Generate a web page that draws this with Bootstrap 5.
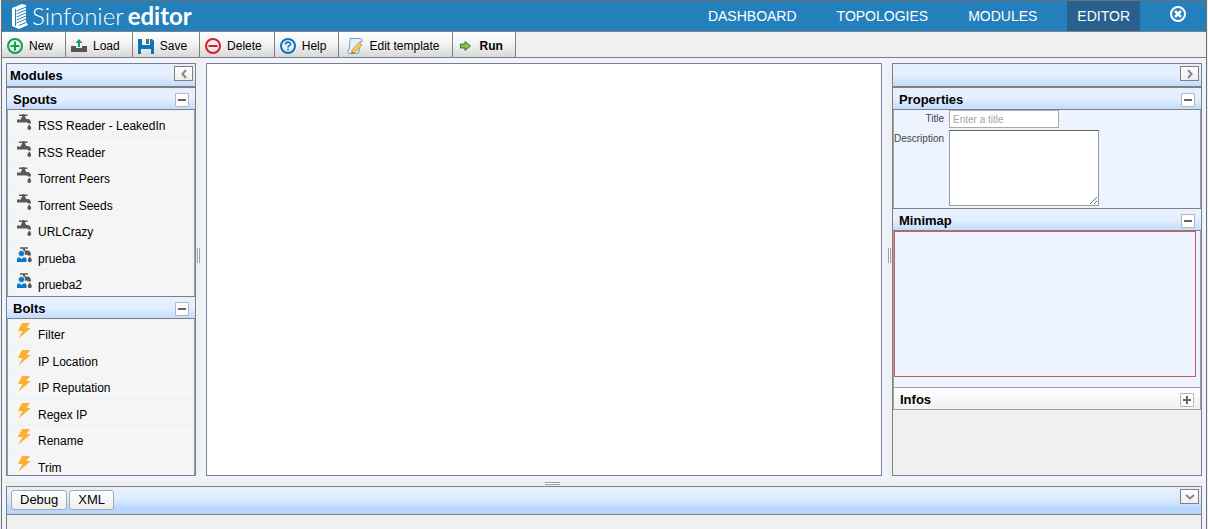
<!DOCTYPE html>
<html lang="en">
<head>
<meta charset="utf-8">
<meta name="viewport" content="width=device-width, initial-scale=1">
<title>Sinfonier editor</title>
<link rel="stylesheet" href="https://cdn.jsdelivr.net/npm/bootstrap@5.3.0/dist/css/bootstrap.min.css">
<style>
:root { --line: #808080; --pane: #edf4ff; --soft: #f0f0f0; }
body { font-family: "Liberation Sans", Arial, sans-serif; font-size: 12px; line-height: 16px; color: #000; background: var(--soft); }
.app { height: 100vh; border: 1px solid #707070; border-bottom: 0; margin: 0 1px; background: var(--soft); }
.topbar { background: #2380bd; border-bottom: 1px solid var(--line); height: 31px; }
.brand { color: #fff; font-family: Lato, sans-serif; font-size: 24px; line-height: 30px; }
.brand .thin { font-weight: 300; }
.brand .thick { font-weight: 700; }
.brand svg { margin-left: 9px; margin-right: 3px; }
.menu { gap: 20px; padding-right: 10px; }
.menu a { color: #fff; font-size: 14px; line-height: 30px; padding: 0 10px; text-decoration: none; }
.menu a.current { background: #28608f; }
.menu svg { margin-top: 5px; }
.toolbar { border-bottom: 1px solid var(--line); height: 26px; }
.tool { border: 0; border-right: 1px solid var(--line); background: linear-gradient(#fff, #f2f2f2 50%, #d8d8d8); padding: 2px 12px 0 5px; color: #000; gap: 6px; }
.tool.template { padding-left: 8px; }
.unit { background: var(--pane); padding: 5px 0; }
.unit-left { width: 194px; padding-left: 4px; }
.unit-center { padding: 5px; }
.unit-right { width: 314px; padding-right: 4px; }
.panel { border: 1px solid var(--line); background: var(--soft); height: 100%; }
.gutter { width: 5px; }
.gutter-row { height: 5px; }
.grip { width: 3px; height: 15px; border: solid #a0a0a0; border-width: 0 1px; background: #fff; margin-bottom: 28px; }
.gutter-row .grip { width: 15px; height: 3px; border-width: 1px 0; margin: 0 104px 0 0; }
.head, .section { font-size: 13px; line-height: 24px; font-weight: 700; margin: 0; background: linear-gradient(#e6effd, #e4f0ff 50%, #c2dbff); border-bottom: 1px solid var(--line); height: 22px; flex: none; }
.head { height: 24px; border-bottom-width: 2px; padding: 0 2px 0 3px; }
.section { padding: 0 6px; }
.section.divide { border-top: 1px solid var(--line); height: 23px; }
.section.closed { background: linear-gradient(#fff, #f0f0f0); border: 1px solid #a0a0a0; height: 23px; }
.fold { width: 19px; height: 15px; padding: 0; background: linear-gradient(#fff, #eee); border: 1px solid var(--line); margin-top: 2px; }
.toggle { width: 14px; height: 14px; padding: 0; background: #fff; border: 1px solid #b5b5b5; border-radius: 1px; margin-top: 5px; }
.fold svg, .toggle svg { display: block; margin: auto; }
.modules { display: grid; grid-template-rows: repeat(7, 1fr); height: 186px; flex: none; border: solid #a0a0a0; border-width: 0 1px; background: var(--pane); padding: 0 1px; }
.modules li { background: #f5f5f5; border: 1px solid #ecf3fb; padding-left: 7px; gap: 5px; }
.modules svg { margin-top: 3px; flex: none; }
.modules span { padding-top: 7px; }
.props { background: var(--pane); border: solid #a0a0a0; border-width: 0 1px; font-size: 10px; height: 98px; display: grid; grid-template-columns: 50px 1fr; column-gap: 5px; row-gap: 2px; align-content: start; }
.props label { text-align: right; color: #444; line-height: 17px; }
.props input { display: block; width: 110px; height: 18px; border: 1px solid #a9a9a9; padding: 0 3px; font-size: 10px; }
.props input::placeholder { color: #a5a5a5; opacity: 1; }
.props textarea { display: block; width: 150px; height: 76px; border: 1px solid #999; border-top-color: #666; background: #fff; }
.map-area { background: var(--pane); border: solid #a0a0a0; border-width: 0 1px; padding-right: 4px; height: 156px; }
.viewport-box { border: 1px solid #d05a60; height: 146px; }
.console { height: 43px; background: var(--pane); padding: 0 4px; flex: none; }
.console-head { height: 28px; border-bottom: 1px solid var(--line); background: linear-gradient(#e8f0fd, #dcecff 45%, #b8d6ff 80%, #bcd8ff); padding: 3px 2px 0 4px; gap: 2px; }
.console-head .tab { font-size: 13px; line-height: 18px; height: 20px; padding: 0 8px; border: 1px solid #a5a9b0; border-radius: 3px; background: linear-gradient(#fff, #eee); }
.console-head .fold { margin-top: -1px; }
</style>
</head>
<body>
<svg width="0" height="0" class="position-absolute" aria-hidden="true">
  <defs>
    <g id="tap" fill="#595959"><path d="M2 .500h3L6 0h1l1 .500h2.500V2H8v1.500h1V5h1.500q3.500 0 3.500 4.500h-3Q11 8.500 9.500 8.500H0V5.500h4v-2h1V2H2z"/><path d="M12.300 10.500c1.200 1.700 1.900 2.400 1.900 3.500a1.900 1.900 0 0 1-3.800 0c0-1.100.7-1.800 1.900-3.500z"/></g>
    <g id="usertap"><path fill="#595959" d="M3 .300h8v1.500H8V3.500h1.500c3.500 0 4.500 1.500 4.500 5h-3.500V7.800H8V5L6 3V1.800H3zM12.800 9.500c1.200 1.700 2 2.500 2 3.800a2 2 0 0 1-4 0c0-1.300.8-2.100 2-3.800z"/><circle cx="4.500" cy="6.500" r="3" fill="#0a78c4" stroke="#f5f5f5" stroke-width=".6"/><path fill="#0a78c4" d="M0 15v-2.500Q0 10.300 2.200 10.300L4.500 12l2.300-1.700Q9.500 10.300 9.500 12.500V15z"/></g>
    <path id="bolt" fill="#fbb034" d="M5 0h8L9.500 5H14L1.500 15.500 5.500 8H1z"/>
    <path id="minus" d="M2 5h8v2H2z" fill="#666"/>
  </defs>
</svg>
<div class="app d-flex flex-column overflow-hidden">
  <header class="topbar d-flex justify-content-between flex-shrink-0">
    <div class="brand d-flex align-items-center">
      <svg width="18" height="27" viewBox="0 0 18 27" fill="none"><path fill="#fff" d="M1 5 11 1l4 1v17l2 3-9 4-7-3z"/><path stroke="#2380bd" stroke-width="1" d="M5.500 8 15 4M5.500 11 15 7M5.500 14 15 10M5.500 17 15 13M5.500 20 15 16M8 22.500l7-3M4.500 6v17"/></svg>
      <span class="thin">Sinfonier</span><span class="thick ms-1">editor</span>
    </div>
    <nav class="menu d-flex align-items-stretch">
      <a href="#">DASHBOARD</a><a href="#">TOPOLOGIES</a><a href="#">MODULES</a><a href="#" class="current" aria-current="page">EDITOR</a>
      <a href="#" aria-label="Close"><svg width="16" height="16" viewBox="0 0 16 16" fill="none" stroke="#fff" class="d-block"><circle cx="8" cy="8" r="7" stroke-width="2"/><path d="m5 5 6 6M11 5l-6 6" stroke-width="2.500"/></svg></a>
    </nav>
  </header>
  <div class="toolbar d-flex flex-shrink-0" role="toolbar">
    <button class="tool d-flex align-items-center"><svg width="16" height="16" viewBox="0 0 16 16" fill="none" stroke="#0ba453" stroke-width="2"><circle cx="8" cy="8" r="7"/><path d="M8 3.500v9M3.500 8h9"/></svg>New</button>
    <button class="tool d-flex align-items-center"><svg width="16" height="16" viewBox="0 0 16 16"><path fill="#555" d="M0 8h5v2h6V8h5v6H0z"/><path fill="#0ba453" d="m8 1 3.500 4H9v4H7V5H4.500z"/></svg>Load</button>
    <button class="tool d-flex align-items-center"><svg width="16" height="16" viewBox="0 0 16 16"><path fill="#0b75bc" d="M0 1h4v6h8V1h2l2 2v13h-3v-5H3v5H0z"/><path fill="#666" d="M8 1h3v5H8z"/></svg>Save</button>
    <button class="tool d-flex align-items-center"><svg width="16" height="16" viewBox="0 0 16 16" fill="none" stroke="#db1d24" stroke-width="2"><circle cx="8" cy="8" r="7"/><path d="M3.500 8h9"/></svg>Delete</button>
    <button class="tool d-flex align-items-center"><svg width="16" height="16" viewBox="0 0 16 16" fill="none" stroke="#0b75c4" stroke-width="2"><circle cx="8" cy="8" r="7"/><path d="M5.500 6.500c0-3 5-3 5-.5 0 1.700-2.500 1.600-2.500 3.500M8 10.700v1.800" stroke-width="1.700"/></svg>Help</button>
    <button class="tool template d-flex align-items-center"><svg width="16" height="16" viewBox="0 0 16 16"><path fill="#e3effb" stroke="#6f9fd0" d="M3 .5h10.500q2 0 1.500 3h-2L12 14q0 1.500-2 1.500H2Q0 15 1 12h1L3 3z"/><path fill="#f7c85c" stroke="#c98b35" stroke-width=".8" d="m5 12 7-7.500 3 2.500-7 7.500-3.500 1z"/><path fill="#555" d="m4.500 15.500.5-2 1.500 1.500z"/></svg>Edit template</button>
    <button class="tool d-flex align-items-center fw-bold"><svg width="16" height="16" viewBox="0 0 16 16"><path fill="#82c455" stroke="#39791f" d="M2.500 6H7V3.500L12.500 8 7 12.500V10H2.500z"/></svg>Run</button>
  </div>
  <main class="d-flex flex-fill overflow-hidden">
    <aside class="unit unit-left flex-shrink-0">
      <div class="panel d-flex flex-column overflow-hidden">
        <h2 class="head d-flex justify-content-between">Modules<button class="fold" aria-label="Collapse modules"><svg width="8" height="10" viewBox="0 0 8 10" fill="none" stroke="#888" stroke-width="2"><path d="M6 1 2.500 5 6 9"/></svg></button></h2>
        <h3 class="section d-flex justify-content-between">Spouts<button class="toggle" aria-label="Collapse spouts"><svg width="12" height="12"><use href="#minus"/></svg></button></h3>
        <ul class="modules list-unstyled mb-0">
          <li class="d-flex"><svg width="16" height="16"><use href="#tap"/></svg><span>RSS Reader - LeakedIn</span></li>
          <li class="d-flex"><svg width="16" height="16"><use href="#tap"/></svg><span>RSS Reader</span></li>
          <li class="d-flex"><svg width="16" height="16"><use href="#tap"/></svg><span>Torrent Peers</span></li>
          <li class="d-flex"><svg width="16" height="16"><use href="#tap"/></svg><span>Torrent Seeds</span></li>
          <li class="d-flex"><svg width="16" height="16"><use href="#tap"/></svg><span>URLCrazy</span></li>
          <li class="d-flex"><svg width="16" height="16"><use href="#usertap"/></svg><span>prueba</span></li>
          <li class="d-flex"><svg width="16" height="16"><use href="#usertap"/></svg><span>prueba2</span></li>
        </ul>
        <h3 class="section divide d-flex justify-content-between">Bolts<button class="toggle" aria-label="Collapse bolts"><svg width="12" height="12"><use href="#minus"/></svg></button></h3>
        <ul class="modules list-unstyled mb-0">
          <li class="d-flex"><svg width="16" height="16"><use href="#bolt"/></svg><span>Filter</span></li>
          <li class="d-flex"><svg width="16" height="16"><use href="#bolt"/></svg><span>IP Location</span></li>
          <li class="d-flex"><svg width="16" height="16"><use href="#bolt"/></svg><span>IP Reputation</span></li>
          <li class="d-flex"><svg width="16" height="16"><use href="#bolt"/></svg><span>Regex IP</span></li>
          <li class="d-flex"><svg width="16" height="16"><use href="#bolt"/></svg><span>Rename</span></li>
          <li class="d-flex"><svg width="16" height="16"><use href="#bolt"/></svg><span>Trim</span></li>
        </ul>
      </div>
    </aside>
    <div class="gutter d-flex align-items-center justify-content-center flex-shrink-0"><div class="grip"></div></div>
    <section class="unit unit-center flex-fill"><div class="panel bg-white"></div></section>
    <div class="gutter d-flex align-items-center justify-content-center flex-shrink-0"><div class="grip"></div></div>
    <aside class="unit unit-right flex-shrink-0">
      <div class="panel overflow-hidden">
        <div class="head d-flex justify-content-end"><button class="fold" aria-label="Collapse properties pane"><svg width="8" height="10" viewBox="0 0 8 10" fill="none" stroke="#888" stroke-width="2"><path d="M2 1l3.500 4L2 9"/></svg></button></div>
        <h3 class="section d-flex justify-content-between">Properties<button class="toggle" aria-label="Collapse properties"><svg width="12" height="12"><use href="#minus"/></svg></button></h3>
        <form class="props">
          <label for="title">Title</label><input id="title" type="text" placeholder="Enter a title">
          <label for="description">Description</label><textarea id="description"></textarea>
        </form>
        <h3 class="section divide d-flex justify-content-between">Minimap<button class="toggle" aria-label="Collapse minimap"><svg width="12" height="12"><use href="#minus"/></svg></button></h3>
        <div class="map-area"><div class="viewport-box"></div></div>
        <h3 class="section closed d-flex justify-content-between">Infos<button class="toggle" aria-label="Expand infos"><svg width="12" height="12"><path fill="#666" d="M2 5h3V2h2v3h3v2H7v3H5V7H2z"/></svg></button></h3>
      </div>
    </aside>
  </main>
  <div class="gutter-row d-flex align-items-center justify-content-center flex-shrink-0"><div class="grip"></div></div>
  <footer class="console">
    <div class="panel border-bottom-0">
      <div class="console-head d-flex align-items-start">
        <button class="tab">Debug</button><button class="tab">XML</button>
        <button class="fold ms-auto" aria-label="Collapse console"><svg width="10" height="8" viewBox="0 0 10 8" fill="none" stroke="#888" stroke-width="2"><path d="m1 2 4 3.500L9 2"/></svg></button>
      </div>
    </div>
  </footer>
</div>
<script src="https://cdn.jsdelivr.net/npm/bootstrap@5.3.0/dist/js/bootstrap.bundle.min.js"></script>
</body>
</html>
